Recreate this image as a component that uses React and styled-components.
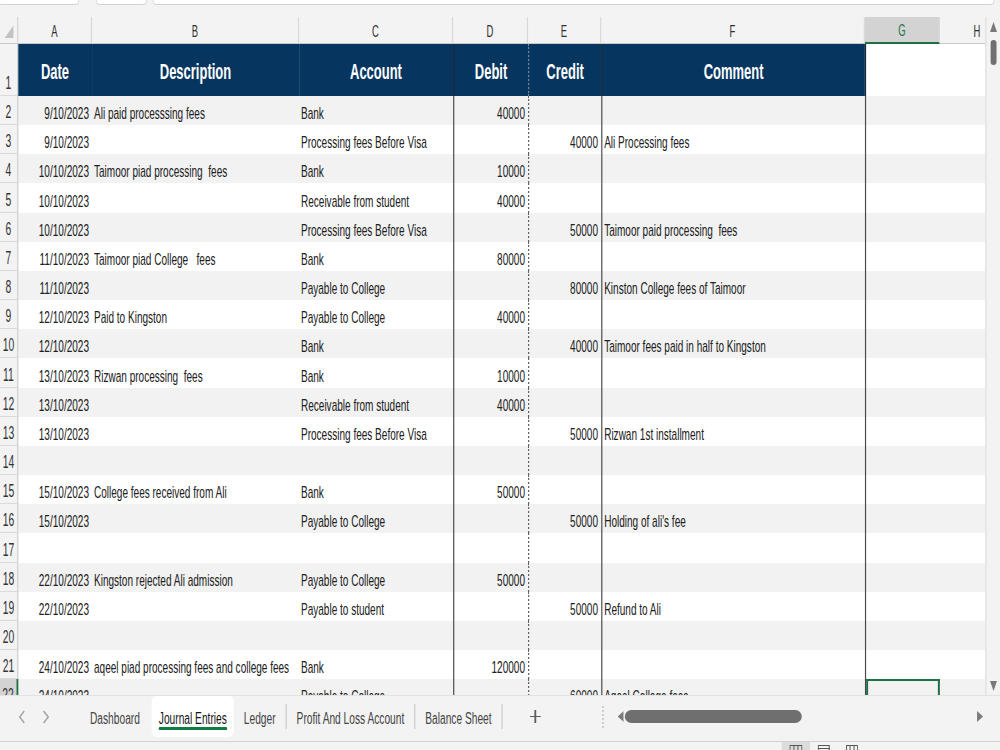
import React from "react";
import styled, { createGlobalStyle } from "styled-components";

// the whole sheet is drawn wide and squeezed horizontally like the screenshot
const SX = 0.59;
const u = px => `${(px / SX).toFixed(2)}px`;
const COLS = [18, 74, 207, 154, 75, 73, 264, 75, 75].map(u).join(" ");
const NAVY = "#06355f";
const GREEN = "#1e7145";
const LINE = "#4a4a4a";
const ROW_H = 29.17;

const GlobalStyle = createGlobalStyle`
  html, body { margin: 0; padding: 0; overflow: hidden; background: #fff; }
  body { width: 1000px; height: 750px; }
  * { box-sizing: border-box; }
`;

const Frame = styled.div`
  width: ${u(1000)};
  height: 750px;
  transform: scaleX(${SX});
  transform-origin: 0 0;
  display: flex;
  flex-direction: column;
  font-family: "Liberation Sans", Arial, sans-serif;
  color: #202020;
  background: #f3f3f3;
  overflow: hidden;
`;

const FormulaStrip = styled.div`
  height: 17px;
  flex: none;
  display: flex;
  align-items: flex-start;
`;

const Field = styled.div`
  width: ${p => u(p.$w)};
  margin-left: ${p => u(p.$ml)};
  height: 15px;
  margin-top: -10px;
  background: #fff;
  border: 1px solid #d2d2d2;
  border-radius: ${u(4)} / 4px;
`;

const Main = styled.div`
  height: 678px;
  flex: none;
  display: flex;
`;

const Sheet = styled.div`
  flex: 1;
  min-width: 0;
  overflow: hidden;
  background: #fff;
`;

const Row = styled.div`
  display: grid;
  grid-template-columns: ${COLS};
  height: ${p => p.$h}px;
  background: ${p => p.$bg || "#fff"};
`;

const HeaderRow = styled(Row)`
  background: #f3f3f3;
  border-bottom: 1px solid #c9c9c9;
`;

const Corner = styled.div`
  display: flex;
  align-items: flex-end;
  justify-content: flex-end;
  padding: 0 ${u(3)} 5px 0;
  border-right: 2px solid #d4d4d4;
`;

const ColHead = styled.div`
  display: flex;
  align-items: center;
  justify-content: center;
  padding-top: 3px;
  font-size: 16px;
  color: ${p => (p.$sel ? GREEN : "#2e2e2e")};
  background: ${p => (p.$sel ? "#d3d3d3" : "transparent")};
  border-right: 2px solid #d9d9d9;
  border-bottom: ${p => (p.$sel ? `2px solid ${GREEN}` : "none")};
  margin-bottom: ${p => (p.$sel ? "-1px" : "0")};
`;

const RowNum = styled.div`
  display: flex;
  align-items: flex-end;
  justify-content: center;
  padding-bottom: 2px;
  font-size: 17.5px;
  line-height: 20px;
  color: #333;
  background: ${p => (p.$sel ? "#d3d3d3" : "#f3f3f3")};
  border-bottom: 1px solid #dadada;
  border-right: ${p => (p.$sel ? `${u(2)} solid ${GREEN}` : "2px solid #cfcfcf")};
`;

const Cell = styled.div`
  display: flex;
  align-items: flex-end;
  justify-content: ${p => (p.$align === "right" ? "flex-end" : "flex-start")};
  padding: 0 ${u(3)} 1px ${u(2)};
  font-size: 17px;
  line-height: 20px;
  white-space: pre;
  overflow: hidden;
  border-left: ${p => (p.$line ? `2px ${p.$line} ${p.$line === "dotted" ? "#5e5e5e" : LINE}` : "none")};
  box-shadow: ${p =>
    p.$sel
      ? `inset ${u(2)} 0 0 ${GREEN}, inset -${u(2)} 0 0 ${GREEN}, inset 0 2px 0 ${GREEN}`
      : "none"};
`;

const TitleCell = styled.div`
  display: flex;
  align-items: center;
  justify-content: center;
  padding-top: 3px;
  font-size: 22px;
  font-weight: 700;
  color: #fff;
  background: ${p => (p.$blank ? "#fff" : NAVY)};
  border-left: ${p => (p.$line ? `2px ${p.$line} ${p.$line === "dotted" ? "#7a8797" : "#1d2733"}` : "none")};
`;

const VScroll = styled.div`
  width: ${u(15)};
  flex: none;
  display: flex;
  flex-direction: column;
  align-items: center;
  padding: 5px 0 4px ${u(1)};
  background: #f3f3f3;
  border-left: 2px solid #dedede;
`;

const VThumb = styled.div`
  width: ${u(6)};
  height: 25px;
  margin-top: 8px;
  border-radius: ${u(3)} / 3px;
  background: #707070;
`;

const Spacer = styled.div`
  flex: 1;
`;

const TabBar = styled.div`
  height: 46px;
  flex: none;
  display: flex;
  align-items: stretch;
  padding-bottom: 4px;
  background: #f3f3f3;
  border-top: 1px solid #e2e2e2;
`;

const Nav = styled.div`
  width: ${u(80)};
  flex: none;
  display: flex;
  align-items: center;
  gap: ${u(18)};
  padding-left: ${u(19)};
`;

const Tab = styled.div`
  position: relative;
  display: flex;
  align-items: center;
  padding: 3px ${p => u(p.$active ? 7 : 10)} 0;
  margin-left: ${p => u(p.$active ? 2 : 0)};
  font-size: 17.3px;
  color: ${p => (p.$active ? "#161616" : "#444")};
  background: ${p => (p.$active ? "#fff" : "transparent")};
  border-radius: ${u(5)} / 5px;
  white-space: nowrap;

  &::after {
    content: "";
    display: ${p => (p.$active ? "block" : "none")};
    position: absolute;
    left: ${u(7)};
    right: ${u(7)};
    bottom: 7px;
    height: 3px;
    border-radius: 2px;
    background: #107c41;
  }
`;

const TabSep = styled.div`
  width: ${u(1)};
  height: 25px;
  align-self: center;
  background: #cacaca;
`;

const AddTab = styled.div`
  width: ${u(66)};
  display: flex;
  align-items: center;
  justify-content: center;
`;

const DotSep = styled.div`
  margin-left: ${u(34)};
  height: 22px;
  align-self: center;
  border-left: 2px dotted #b3b3b3;
`;

const HScroll = styled.div`
  flex: 1;
  display: flex;
  align-items: center;
  padding: 0 ${u(17)} 0 ${u(14)};
`;

const HThumb = styled.div`
  width: ${u(177)};
  height: 13px;
  margin-left: ${u(1)};
  border-radius: ${u(7)} / 7px;
  background: #6f6f6f;
`;

const StatusBar = styled.div`
  flex: 1;
  display: flex;
  padding-left: ${u(782)};
  background: #f3f3f3;
  border-top: 1px solid #d2d2d2;
`;

const ViewBtn = styled.div`
  width: ${u(28)};
  display: flex;
  justify-content: center;
  padding-top: 3px;
  background: ${p => (p.$active ? "#dcdcdc" : "transparent")};
`;

const Tri = ({ dir, w = 7, h = 10 }) => {
  const pts = {
    up: `0,${h} ${w},${h} ${w / 2},0`,
    down: `0,0 ${w},0 ${w / 2},${h}`,
    left: `${w},0 ${w},${h} 0,${h / 2}`,
    right: `0,0 0,${h} ${w},${h / 2}`,
  }[dir];
  return (
    <svg width={u(w)} height={h} viewBox={`0 0 ${w} ${h}`} preserveAspectRatio="none">
      <polygon points={pts} fill="#7a7a7a" />
    </svg>
  );
};

const Chevron = ({ left }) => (
  <svg width={u(6)} height={14} viewBox="0 0 6 14" preserveAspectRatio="none">
    <polyline
      points={left ? "5.5,1 0.8,7 5.5,13" : "0.5,1 5.2,7 0.5,13"}
      fill="none"
      stroke="#a3a3a3"
      strokeWidth="1.4"
    />
  </svg>
);

const rows = [
  { n: 2, date: "9/10/2023", desc: "Ali paid processsing fees", acct: "Bank", debit: "40000" },
  { n: 3, date: "9/10/2023", acct: "Processing fees Before Visa", credit: "40000", comment: "Ali Processing fees" },
  { n: 4, date: "10/10/2023", desc: "Taimoor piad processing  fees", acct: "Bank", debit: "10000" },
  { n: 5, date: "10/10/2023", acct: "Receivable from student", debit: "40000" },
  { n: 6, date: "10/10/2023", acct: "Processing fees Before Visa", credit: "50000", comment: "Taimoor paid processing  fees" },
  { n: 7, date: "11/10/2023", desc: "Taimoor piad College   fees", acct: "Bank", debit: "80000" },
  { n: 8, date: "11/10/2023", acct: "Payable to College", credit: "80000", comment: "Kinston College fees of Taimoor" },
  { n: 9, date: "12/10/2023", desc: "Paid to Kingston", acct: "Payable to College", debit: "40000" },
  { n: 10, date: "12/10/2023", acct: "Bank", credit: "40000", comment: "Taimoor fees paid in half to Kingston" },
  { n: 11, date: "13/10/2023", desc: "Rizwan processing  fees", acct: "Bank", debit: "10000" },
  { n: 12, date: "13/10/2023", acct: "Receivable from student", debit: "40000" },
  { n: 13, date: "13/10/2023", acct: "Processing fees Before Visa", credit: "50000", comment: "Rizwan 1st installment" },
  { n: 14 },
  { n: 15, date: "15/10/2023", desc: "College fees received from Ali", acct: "Bank", debit: "50000" },
  { n: 16, date: "15/10/2023", acct: "Payable to College", credit: "50000", comment: "Holding of ali's fee" },
  { n: 17 },
  { n: 18, date: "22/10/2023", desc: "Kingston rejected Ali admission", acct: "Payable to College", debit: "50000" },
  { n: 19, date: "22/10/2023", acct: "Payable to student", credit: "50000", comment: "Refund to Ali" },
  { n: 20 },
  { n: 21, date: "24/10/2023", desc: "aqeel piad processing fees and college fees", acct: "Bank", debit: "120000" },
  { n: 22, date: "24/10/2023", acct: "Payable to College", credit: "60000", comment: "Aqeel College fees" },
];

const letters = ["A", "B", "C", "D", "E", "F", "G", "H"];
const tabs = ["Dashboard", "Journal Entries", "Ledger", "Profit And Loss Account", "Balance Sheet"];

export default function App() {
  return (
    <>
      <GlobalStyle />
      <Frame>
        <FormulaStrip>
          <Field $w={81} $ml={-2} />
          <Field $w={51} $ml={17} />
          <Field $w={841} $ml={6} />
        </FormulaStrip>

        <Main>
          <Sheet>
            <HeaderRow $h={27}>
              <Corner>
                <svg width={u(9)} height={13} viewBox="0 0 9 13" preserveAspectRatio="none">
                  <polygon points="9,0 9,13 0,13" fill="#c2c2c2" />
                </svg>
              </Corner>
              {letters.map(l => (
                <ColHead key={l} $sel={l === "G"}>{l}</ColHead>
              ))}
            </HeaderRow>

            <Row $h={52}>
              <RowNum>1</RowNum>
              <TitleCell>Date</TitleCell>
              <TitleCell>Description</TitleCell>
              <TitleCell>Account</TitleCell>
              <TitleCell $line="solid">Debit</TitleCell>
              <TitleCell $line="dotted">Credit</TitleCell>
              <TitleCell $line="solid">Comment</TitleCell>
              <TitleCell $blank $line="solid" />
              <TitleCell $blank />
            </Row>

            {rows.map(r => (
              <Row key={r.n} $h={ROW_H} $bg={r.n % 2 === 0 ? "#f2f2f2" : "#fff"}>
                <RowNum $sel={r.n === 22}>{r.n}</RowNum>
                <Cell $align="right">{r.date}</Cell>
                <Cell>{r.desc}</Cell>
                <Cell>{r.acct}</Cell>
                <Cell $align="right" $line="solid">{r.debit}</Cell>
                <Cell $align="right" $line="dotted">{r.credit}</Cell>
                <Cell $line="solid">{r.comment}</Cell>
                <Cell $line="solid" $sel={r.n === 22} />
                <Cell />
              </Row>
            ))}
          </Sheet>

          <VScroll>
            <Tri dir="up" />
            <VThumb />
            <Spacer />
            <Tri dir="down" />
          </VScroll>
        </Main>

        <TabBar>
          <Nav>
            <Chevron left />
            <Chevron />
          </Nav>
          {tabs.map((t, i) => (
            <React.Fragment key={t}>
              <Tab $active={t === "Journal Entries"}>{t}</Tab>
              {i >= 2 && <TabSep />}
            </React.Fragment>
          ))}
          <AddTab>
            <svg width={u(11)} height={13} viewBox="0 0 11 13" preserveAspectRatio="none">
              <line x1="5.5" y1="0" x2="5.5" y2="13" stroke="#5c5c5c" strokeWidth="1.8" />
              <line x1="0" y1="6.5" x2="11" y2="6.5" stroke="#5c5c5c" strokeWidth="1.1" />
            </svg>
          </AddTab>
          <DotSep />
          <HScroll>
            <Tri dir="left" w={6} h={11} />
            <HThumb />
            <Spacer />
            <Tri dir="right" w={6} h={11} />
          </HScroll>
        </TabBar>

        <StatusBar>
          <ViewBtn $active>
            <svg width={u(13)} height={10} viewBox="0 0 13 10" preserveAspectRatio="none">
              <rect x="0.5" y="0.5" width="12" height="10" fill="none" stroke="#555" />
              <line x1="4.5" y1="0" x2="4.5" y2="10" stroke="#555" />
              <line x1="8.5" y1="0" x2="8.5" y2="10" stroke="#555" />
            </svg>
          </ViewBtn>
          <ViewBtn>
            <svg width={u(12)} height={10} viewBox="0 0 12 10" preserveAspectRatio="none">
              <rect x="0.5" y="0.5" width="11" height="10" fill="none" stroke="#555" />
              <line x1="0" y1="3.5" x2="12" y2="3.5" stroke="#555" />
            </svg>
          </ViewBtn>
          <ViewBtn>
            <svg width={u(12)} height={10} viewBox="0 0 12 10" preserveAspectRatio="none">
              <rect x="0.5" y="0.5" width="11" height="10" fill="none" stroke="#555" />
              <line x1="4" y1="0" x2="4" y2="10" stroke="#555" />
              <line x1="8" y1="0" x2="8" y2="10" stroke="#555" />
            </svg>
          </ViewBtn>
        </StatusBar>
      </Frame>
    </>
  );
}
